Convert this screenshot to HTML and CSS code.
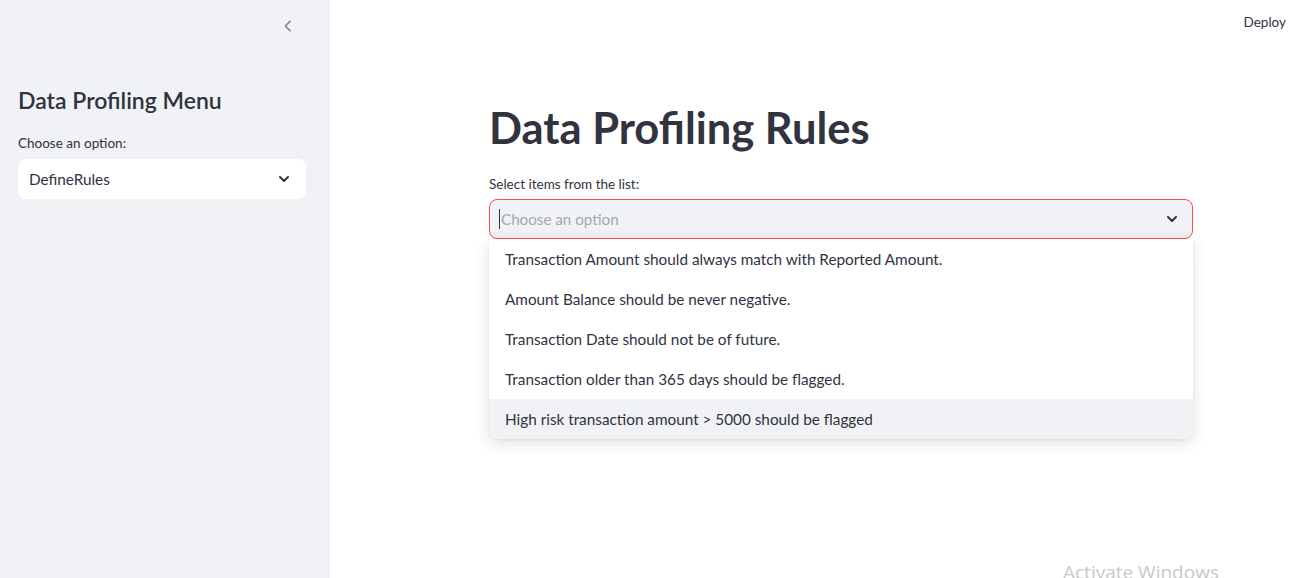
FILE: index.html
```html
<!DOCTYPE html>
<html>
<head>
<meta charset="utf-8">
<link rel="stylesheet" href="styles.css">
</head>
<body>
<div class="app">
  <aside class="sidebar">
    <div class="sidebar-top">
      <button class="collapse" aria-label="Collapse sidebar">
        <svg width="16" height="16" viewBox="0 0 24 24"><path d="M15 5l-7 7 7 7" fill="none" stroke="#808495" stroke-width="2.4" stroke-linecap="round" stroke-linejoin="round"/></svg>
      </button>
    </div>
    <div class="sidebar-body">
      <h2 class="side-title">Data Profiling Menu</h2>
      <div class="field-label side-label">Choose an option:</div>
      <div class="select">
        <span>DefineRules</span>
        <svg class="chev" width="16" height="16" viewBox="0 0 24 24"><path d="M6 9l6 6 6-6" fill="none" stroke="#31333f" stroke-width="3" stroke-linecap="round" stroke-linejoin="round"/></svg>
      </div>
    </div>
  </aside>
  <main class="main">
    <header class="topbar"><span class="deploy">Deploy</span></header>
    <section class="content">
      <h1 class="title">Data Profiling Rules</h1>
      <div class="field-label">Select items from the list:</div>
      <div class="multi-wrap">
        <div class="multi">
          <span class="caret"></span><span class="placeholder">Choose an option</span>
          <svg class="chev" width="16" height="16" viewBox="0 0 24 24"><path d="M6 9l6 6 6-6" fill="none" stroke="#31333f" stroke-width="3" stroke-linecap="round" stroke-linejoin="round"/></svg>
        </div>
        <ul class="menu">
          <li>Transaction Amount should always match with Reported Amount.</li>
          <li>Amount Balance should be never negative.</li>
          <li>Transaction Date should not be of future.</li>
          <li>Transaction older than 365 days should be flagged.</li>
          <li class="active">High risk transaction amount &gt; 5000 should be flagged</li>
        </ul>
      </div>
    </section>
    <div class="watermark">Activate Windows</div>
  </main>
</div>
</body>
</html>
```
FILE: styles.css
```css
* { box-sizing: border-box; }
html, body { margin: 0; padding: 0; height: 100%; }
body {
  font-family: "Lato", "Noto Sans", sans-serif;
  color: #31333f;
  background: #ffffff;
  overflow: hidden;
}
.app { display: flex; height: 578px; }
.sidebar {
  width: 330px;
  flex: none;
  background: #f0f2f6;
  display: flex;
  flex-direction: column;
}
.sidebar-top {
  height: 52px;
  display: flex;
  justify-content: flex-end;
  align-items: center;
  padding-right: 34px;
}
.collapse {
  border: 0; background: transparent; padding: 0;
  width: 16px; height: 16px; display: flex;
}
.sidebar-body { padding: 32px 24px 0 18px; }
.side-title {
  margin: 0 0 17px;
  font-size: 23px;
  font-weight: 600;
  line-height: 32px;
}
.field-label {
  font-size: 13.5px;
  line-height: 20px;
  margin-bottom: 5px;
}
.side-label { margin-bottom: 6px; }
.select {
  height: 40px;
  background: #fff;
  border-radius: 8px;
  display: flex;
  align-items: center;
  justify-content: space-between;
  padding: 0 14px 0 11px;
  font-size: 15.3px;
}
.main { flex: 1; position: relative; display: flex; flex-direction: column; }
.topbar {
  height: 43px;
  display: flex;
  justify-content: flex-end;
  align-items: center;
  padding-right: 25px;
}
.deploy { font-size: 13.5px; }
.content { padding: 56px 0 0 159px; width: 864px; }
.title {
  margin: 0 0 19px;
  font-size: 43.5px;
  font-weight: 700;
  line-height: 56px;
}
.multi-wrap { width: 704px; }
.multi {
  height: 40px;
  background: #f0f2f6;
  border: 1px solid #ff4b4b;
  border-radius: 8px;
  display: flex;
  align-items: center;
  padding: 0 12px 0 9px;
  font-size: 15.2px;
}
.caret { width: 1px; height: 20px; background: #31333f; margin-right: 1px; }
.placeholder { color: #a3a8b4; flex: 1; }
.menu {
  list-style: none;
  margin: 0;
  padding: 0;
  background: #fff;
  border-radius: 0 0 8px 8px;
  box-shadow: 0 4px 16px rgba(0,0,0,0.12), 0 1px 3px rgba(0,0,0,0.06);
  overflow: hidden;
}
.menu li {
  height: 40px;
  display: flex;
  align-items: center;
  padding-left: 16px;
  font-size: 15.3px;
}
.menu li.active { background: #f0f2f6; }
.watermark {
  position: absolute;
  left: 733px;
  top: 559px;
  font-size: 19px;
  line-height: 26px;
  color: #c9c9c9;
  font-family: "Open Sans", sans-serif;
  white-space: nowrap;
}
```
